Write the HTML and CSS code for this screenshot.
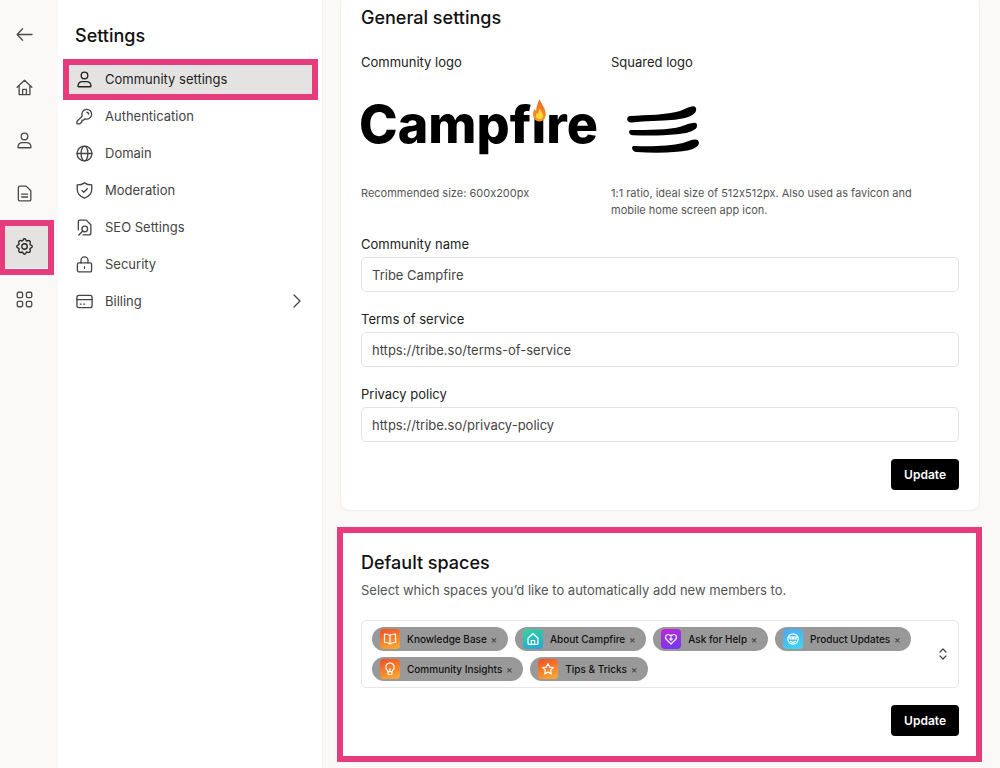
FILE: index.html
```html
<!DOCTYPE html>
<html lang="en">
<head>
<meta charset="utf-8">
<meta name="viewport" content="width=device-width, initial-scale=1">
<title>Community settings</title>
<link rel="stylesheet" href="styles.css">
</head>
<body>
<svg class="sprite" aria-hidden="true">
  <symbol id="i-back" viewBox="0 0 18 18"><path d="M17 9H1.500M7 3 1.200 9 7 15"/></symbol>
  <symbol id="i-home" viewBox="0 0 18 18"><path d="M1.200 8.800 9 1.300l7.800 7.500M3.300 7v9.500h11.400V7M7 16.300V11h4v5.300"/></symbol>
  <symbol id="i-user" viewBox="0 0 18 18"><circle cx="9" cy="4.700" r="3.500"/><path d="M2.700 16.700c-.4 0-.6-.3-.6-.7.1-3 2-4.800 4.900-4.800h4c2.900 0 4.800 1.800 4.900 4.800 0 .4-.2.7-.6.700z"/></symbol>
  <symbol id="i-doc" viewBox="0 0 18 18"><path d="M4 1.200h6.800l4.900 4.900v9.200a1.500 1.500 0 0 1-1.500 1.500H4a1.500 1.500 0 0 1-1.500-1.500V2.700A1.500 1.500 0 0 1 4 1.200zM6 9.700h6.300M6 12.700h6.300"/></symbol>
  <symbol id="i-gear" viewBox="0 0 18 18"><path d="M7.300 2.600Q7.500.8 9 .8t1.700 1.800q.3.900 1.200.5 1.600-1 2.700 0t.2 2.800q-.5.900.6 1.300 1.800.4 1.800 1.800t-1.800 1.800q-1.100.4-.6 1.300.9 1.700-.2 2.800t-2.700 0q-.9-.4-1.200.5Q10.500 17.200 9 17.200t-1.700-1.800q-.3-.9-1.200-.5-1.600 1-2.700 0t-.2-2.800q.5-.9-.6-1.300Q.8 10.400.8 9t1.800-1.800q1.100-.4.600-1.300-.9-1.700.2-2.800t2.700 0q.9.400 1.200-.5z"/><circle cx="9" cy="9" r="2.900"/></symbol>
  <symbol id="i-grid" viewBox="0 0 18 18"><rect x="1.300" y="1.300" width="5.700" height="5.700" rx="1.500"/><rect x="11" y="1.300" width="5.700" height="5.700" rx="1.500"/><rect x="1.300" y="11" width="5.700" height="5.700" rx="1.500"/><rect x="11" y="11" width="5.700" height="5.700" rx="1.500"/></symbol>
  <symbol id="i-key" viewBox="0 0 18 18"><path d="M6.600 8.600a5.200 5.200 0 1 1 2.800 2.800l-1.300 1.400H6.300v1.700l-1.900 1.900a1.300 1.300 0 0 1-.9.400H1.700a.7.700 0 0 1-.7-.7v-1.300c0-.4.100-.7.400-1z"/><path d="M11.500 4.500q1.700.3 2 2"/></symbol>
  <symbol id="i-globe" viewBox="0 0 18 18"><circle cx="9" cy="9" r="7.900"/><ellipse cx="9" cy="9" rx="3.600" ry="7.900"/><path d="M1.100 9h15.800"/></symbol>
  <symbol id="i-shield" viewBox="0 0 18 18"><path d="M9 .9c2 1.500 4.500 2.200 7.700 2.200v4.700c0 4.600-3 7.700-7.700 9.300-4.700-1.600-7.700-4.700-7.700-9.300V3.100C4.500 3.100 7 2.400 9 .9zM6.200 8.900l2 2 3.800-3.800"/></symbol>
  <symbol id="i-seo" viewBox="0 0 18 18"><path d="M2.500 11.500V2.700A1.500 1.500 0 0 1 4 1.200h6.800l4.900 4.900v9.200a1.500 1.500 0 0 1-1.500 1.500H7.500"/><circle cx="9.300" cy="10.500" r="3"/><path d="m7.200 12.700-4.200 4.200"/></symbol>
  <symbol id="i-lock" viewBox="0 0 18 18"><rect x="1.500" y="7.300" width="15" height="9.600" rx="1.600"/><path d="M5.300 7.300V4.600a3.700 3.700 0 0 1 7.400 0v2.700M9 11.300v1.800"/></symbol>
  <symbol id="i-card" viewBox="0 0 18 18"><rect x="1" y="2.500" width="16" height="13" rx="2"/><path d="M1 7h16M4.500 11.700h1M8.200 11.700h1"/></symbol>
</svg>

<div class="app">
  <nav class="rail" aria-label="Main">
    <a class="rail-link" href="#back" aria-label="Back"><svg class="icon"><use href="#i-back"/></svg></a>
    <a class="rail-link" href="#home" aria-label="Home"><svg class="icon"><use href="#i-home"/></svg></a>
    <a class="rail-link" href="#members" aria-label="Members"><svg class="icon"><use href="#i-user"/></svg></a>
    <a class="rail-link" href="#content" aria-label="Content"><svg class="icon"><use href="#i-doc"/></svg></a>
    <a class="rail-link rail-link-active" href="#settings" aria-label="Settings"><svg class="icon"><use href="#i-gear"/></svg></a>
    <a class="rail-link" href="#apps" aria-label="Apps"><svg class="icon"><use href="#i-grid"/></svg></a>
  </nav>

  <aside class="sidebar">
    <h1 class="title">Settings</h1>
    <nav class="menu" aria-label="Settings">
      <a class="menu-link menu-link-active" href="#community"><svg class="icon"><use href="#i-user"/></svg>Community settings</a>
      <a class="menu-link" href="#authentication"><svg class="icon"><use href="#i-key"/></svg>Authentication</a>
      <a class="menu-link" href="#domain"><svg class="icon"><use href="#i-globe"/></svg>Domain</a>
      <a class="menu-link" href="#moderation"><svg class="icon"><use href="#i-shield"/></svg>Moderation</a>
      <a class="menu-link" href="#seo"><svg class="icon"><use href="#i-seo"/></svg>SEO Settings</a>
      <a class="menu-link" href="#security"><svg class="icon"><use href="#i-lock"/></svg>Security</a>
      <a class="menu-link" href="#billing"><svg class="icon"><use href="#i-card"/></svg>Billing<svg class="chevron" viewBox="0 0 8 14"><path d="m1 1 6 6-6 6"/></svg></a>
    </nav>
  </aside>

  <main class="main">
    <section class="card">
      <h2 class="title">General settings</h2>
      <div class="logos">
        <div class="logo-block">
          <h3 class="label">Community logo</h3>
          <div class="logo-frame">
            <svg class="wordmark" viewBox="0 0 240 80" role="img" aria-label="Campfire">
              <defs>
                <linearGradient id="flame" x1="0" y1="0" x2="0" y2="1"><stop offset="0" stop-color="#e8672c"/><stop offset="1" stop-color="#f99a1d"/></linearGradient>
              </defs>
              <text class="wordmark-text" x="-2" y="57">Campfire</text>
              <rect fill="#fff" x="173" y="10" width="12" height="17"/>
              <path fill="url(#flame)" d="M178.500 13c1 4 6.300 9 6.300 15 0 4.500-2.800 7.500-6.400 7.500s-6.400-3-6.400-7.500c0-2.200 1-4 2-5 .2 1 .5 1.700 1 2 .2-4 2-8 3.500-12z"/>
              <path fill="#ffd83d" d="M178.800 22.500c.4 2.400 3.200 4 3.200 7a3.500 3.500 0 0 1-7 0c0-1.200.5-2 1-2.500l1.200 1.400c0-2.200.6-4.300 1.600-5.900z"/>
            </svg>
          </div>
          <p class="hint">Recommended size: 600x200px</p>
        </div>
        <div class="logo-block">
          <h3 class="label">Squared logo</h3>
          <div class="logo-frame">
            <svg class="mark" viewBox="0 0 104 80" role="img" aria-label="Squared logo">
              <path d="M19 30c16-1 37-1 50-5 5-2 9-4.500 13.500-4.700 3 0 3.500 4 1.500 6.500-4 4.500-12 6-20 7-15 1.500-30 1-43 2.700-5.500.7-6.500-6-2-6.500z"/>
              <path d="M20 44c18 0 38 0 50-3.500 5-1.500 9-3.800 13.500-3.800 3.500.2 3.500 4.300.5 6.600-4 3.200-11 4.200-18 5-14 1.500-30 1.300-44 1-4.500-.2-5-5.300-2-5.300z"/>
              <path d="M23 60c17 .7 36 .2 49-3 5-1.500 8-3.500 12.500-3.500 4 .2 4.500 4.500 1.500 7-5 4-13 4.600-20 5.300-14 1.300-28 1-40.500.2-4.500-.4-6-6-2.500-6z"/>
            </svg>
          </div>
          <p class="hint">1:1 ratio, ideal size of 512x512px. Also used as favicon and mobile home screen app icon.</p>
        </div>
      </div>
      <form class="form">
        <div class="field"><label class="label" for="name">Community name</label><input class="input" id="name" type="text" value="Tribe Campfire"></div>
        <div class="field"><label class="label" for="terms">Terms of service</label><input class="input" id="terms" type="text" value="https://tribe.so/terms-of-service"></div>
        <div class="field"><label class="label" for="privacy">Privacy policy</label><input class="input" id="privacy" type="text" value="https://tribe.so/privacy-policy"></div>
        <button class="update" type="button">Update</button>
      </form>
    </section>

    <section class="card card-marked">
      <h2 class="title">Default spaces</h2>
      <p class="lead">Select which spaces you’d like to automatically add new members to.</p>
      <div class="picker">
        <ul class="chips">
          <li class="chip"><svg class="badge badge-orange" viewBox="0 0 20 20"><path d="M10 6.500C9 5.300 7.500 5 4.500 5v8.500c3 0 4.500.3 5.500 1.500 1-1.200 2.500-1.500 5.500-1.500V5c-3 0-4.500.3-5.500 1.500zM10 6.500V15"/></svg>Knowledge Base<button class="remove" type="button" aria-label="Remove Knowledge Base">×</button></li>
          <li class="chip"><svg class="badge badge-teal" viewBox="0 0 20 20"><path d="M5 9.300 10 4.500l5 4.800v5a1 1 0 0 1-1 1H6a1 1 0 0 1-1-1zM8.300 15v-3.500h3.400V15"/></svg>About Campfire<button class="remove" type="button" aria-label="Remove About Campfire">×</button></li>
          <li class="chip"><svg class="badge badge-purple" viewBox="0 0 20 20"><path d="M10 15 5.500 10.500C3 7.700 5.500 5 8 5.600c1 .2 1.500.8 2 1.400.5-.6 1-1.200 2-1.400 2.500-.6 5 2.100 2.500 4.900zM10 8.500v3M8.500 10h3"/></svg>Ask for Help<button class="remove" type="button" aria-label="Remove Ask for Help">×</button></li>
          <li class="chip"><svg class="badge badge-blue" viewBox="0 0 20 20"><circle cx="10" cy="10" r="5.200"/><path d="M5.500 8h9M7 8.500v1.500h2.500V8.500M10.500 8.500V10H13V8.500M7.500 12.300c1.500 1.300 3.500 1.300 5 0"/></svg>Product Updates<button class="remove" type="button" aria-label="Remove Product Updates">×</button></li>
          <li class="chip"><svg class="badge badge-orange" viewBox="0 0 20 20"><path d="M8 12.500c0-1-2.200-1.800-2.200-4.300a4.200 4.200 0 0 1 8.400 0c0 2.500-2.200 3.300-2.200 4.300v2a1 1 0 0 1-1 1H9a1 1 0 0 1-1-1zM8 12.700h4M10 12.500V9.500"/></svg>Community Insights<button class="remove" type="button" aria-label="Remove Community Insights">×</button></li>
          <li class="chip"><svg class="badge badge-orange" viewBox="0 0 20 20"><path d="m10 4.700 1.600 3.400 3.700.5-2.700 2.600.7 3.700-3.300-1.800-3.300 1.800.7-3.700-2.700-2.600 3.700-.5z"/></svg>Tips &amp; Tricks<button class="remove" type="button" aria-label="Remove Tips &amp; Tricks">×</button></li>
        </ul>
        <button class="toggle" type="button" aria-label="Show spaces"><svg viewBox="0 0 8 12"><path d="m1 4 3-3 3 3M1 8l3 3 3-3"/></svg></button>
      </div>
      <button class="update" type="button">Update</button>
    </section>
  </main>
</div>
</body>
</html>
```
FILE: styles.css
```css
* { box-sizing: border-box; }

body {
  margin: 0;
  background: #faf9f7;
  color: #444;
  font: 13px/20px Inter, "Liberation Sans", sans-serif;
  font-variant-ligatures: no-contextual;
}

h1, h2, h3, p, ul { margin: 0; padding: 0; }
a { color: inherit; text-decoration: none; }
button, input { font: inherit; color: inherit; }
svg { display: block; flex: none; fill: none; stroke: currentColor; stroke-linecap: round; stroke-linejoin: round; }

.sprite { position: absolute; width: 0; height: 0; }
.icon { width: 17px; height: 17px; stroke-width: 1.4; }

.app {
  display: grid;
  grid-template-columns: 58px 265px 1fr;
  min-height: 100vh;
}

.rail { display: flex; flex-direction: column; gap: 9px; padding-top: 12px; color: #4a4a4a; }
.rail-link {
  position: relative;
  display: flex;
  align-items: center;
  justify-content: center;
  width: 49px;
  height: 44px;
}
.rail-link-active { background: #e4e3e1; color: #222; }
.rail-link-active::after {
  content: "";
  position: absolute;
  inset: -4px -5px -7px -1px;
  border: 6px solid #e63b7d;
}

.sidebar { background: #fff; border-right: 1px solid #f3f2f0; padding: 24px 4px 24px 5px; }
.title { color: #111; font-size: 18px; font-weight: 500; line-height: 24px; }
.sidebar .title { padding-left: 12px; }

.menu { display: flex; flex-direction: column; gap: 1px; padding-top: 13px; }
.menu-link {
  position: relative;
  display: flex;
  align-items: center;
  gap: 12px;
  height: 36px;
  padding: 0 17px 0 13px;
}
.menu-link-active { background: #e4e3e1; color: #222; }
.menu-link-active::after {
  content: "";
  position: absolute;
  inset: -2px 0 -3px;
  border: 6px solid #e63b7d;
}
.chevron { width: 8px; height: 14px; margin-left: auto; stroke-width: 1.3; }

.main { min-width: 0; padding: 0 18px 6px 14px; overflow: hidden; }
.card {
  margin: 0 3px 17px 4px;
  padding: 6px 20px 20px 20px;
  background: #fff;
  border-radius: 0 0 8px 8px;
  box-shadow: 0 0 2px #d9d8d6;
}
.card-marked {
  display: flex;
  flex-direction: column;
  margin: 0;
  padding: 18px 17px 20px 18px;
  border: 6px solid #e63b7d;
  border-radius: 0;
  box-shadow: none;
}

.logos { display: grid; grid-template-columns: 250px minmax(0, 1fr); padding-top: 22px; }
.label { display: block; color: #222; font-size: 13px; font-weight: 400; line-height: 20px; }
.logo-frame { display: flex; align-items: center; height: 80px; margin: 14px 0 19px; }
.wordmark { width: 240px; height: 80px; overflow: visible; stroke: none; }
.wordmark-text { fill: #000; font-size: 52px; font-weight: 800; }
.mark { width: 104px; height: 80px; fill: #000; stroke: none; }
.hint { max-width: 330px; color: #555; font-size: 11px; line-height: 17px; }

.form { display: flex; flex-direction: column; gap: 17px; padding-top: 15px; }
.field { display: flex; flex-direction: column; gap: 3px; }
.input {
  width: 100%;
  height: 35px;
  padding: 0 10px;
  border: 1px solid #e3e3e3;
  border-radius: 5px;
  background: #fff;
}
.update {
  align-self: flex-end;
  height: 31px;
  padding: 0 13px;
  border: 0;
  border-radius: 4px;
  background: #000;
  color: #fff;
  font-size: 12px;
  font-weight: 600;
}

.lead { padding-top: 5px; color: #555; }
.picker {
  display: flex;
  align-items: center;
  margin: 20px 0 17px;
  padding: 6px 11px 6px 10px;
  border: 1px solid #e6e6e6;
  border-radius: 5px;
}
.chips { display: flex; flex: 1; flex-wrap: wrap; gap: 6px 7px; list-style: none; }
.chip {
  display: flex;
  align-items: center;
  height: 24px;
  padding: 0 7px 0 8px;
  border-radius: 12px;
  background: #999;
  color: #111;
  font-size: 10px;
  font-weight: 500;
}
.badge { width: 20px; height: 20px; margin-right: 7px; border-radius: 4px; color: #fff; stroke-width: 1.2; }
.badge-orange { background: linear-gradient(160deg, #f04e23, #fbb034); }
.badge-teal { background: linear-gradient(160deg, #35d39a, #25a5d8); }
.badge-purple { background: linear-gradient(160deg, #c026d3, #6d3bf5); }
.badge-blue { background: linear-gradient(160deg, #4aa8f5, #3fd8f0); }
.remove { width: 14px; padding: 0; border: 0; background: none; color: #444; font-size: 10px; line-height: 20px; }
.toggle { padding: 0; border: 0; background: none; color: #444; }
.toggle svg { width: 8px; height: 12px; stroke-width: 1.2; }
```
